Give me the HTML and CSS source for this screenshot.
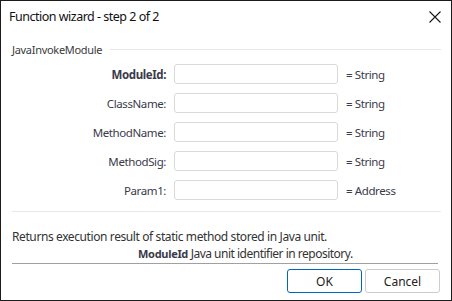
FILE: index.html
```html
<!DOCTYPE html>
<html lang="en">
<head>
    <meta charset="UTF-8">
    <title>Function wizard - step 2 of 2</title>
    <link rel="stylesheet" href="styles.css">
</head>
<body>

<div class="window">
    <div class="titlebar">
        <span class="title">Function wizard - step 2 of 2</span>
        <svg class="close" width="12" height="12" viewBox="0 0 12 12">
            <path d="M0.5 0.5 L11.5 11.5 M11.5 0.5 L0.5 11.5" stroke="#1a1a1a" stroke-width="1.1" fill="none"/>
        </svg>
    </div>

    <div class="group-head">
        <span>JavaInvokeModule</span>
        <div class="group-line"></div>
    </div>

    <div class="params">
        <label class="param-label bold">ModuleId:</label>
        <input type="text" class="param-input">
        <span class="param-type">= String</span>

        <label class="param-label">ClassName:</label>
        <input type="text" class="param-input">
        <span class="param-type">= String</span>

        <label class="param-label">MethodName:</label>
        <input type="text" class="param-input">
        <span class="param-type">= String</span>

        <label class="param-label">MethodSig:</label>
        <input type="text" class="param-input">
        <span class="param-type">= String</span>

        <label class="param-label">Param1:</label>
        <input type="text" class="param-input">
        <span class="param-type">= Address</span>
    </div>

    <div class="separator"></div>

    <div class="description">
        <p class="desc-main">Returns execution result of static method stored in Java unit.</p>
        <p class="desc-param"><b>ModuleId</b> Java unit identifier in repository.</p>
    </div>

    <div class="footer">
        <button class="btn btn-default">OK</button>
        <button class="btn">Cancel</button>
    </div>
</div>

</body>
</html>
```

FILE: styles.css
```css
* { box-sizing: border-box; }
body { margin: 0; font-family: "Segoe UI", "Noto Sans", "Open Sans", sans-serif; font-size: 12px; letter-spacing: -0.4px; color: #333; background: #fff; }
.window { width: 452px; height: 301px; border: 1px solid #1c1c1c; background: #fff; display: flex; flex-direction: column; }
.titlebar { height: 31px; display: flex; align-items: center; justify-content: space-between; padding: 0 10px 0 8px; }
.title { font-size: 12.5px; letter-spacing: -0.5px; color: #111; }
.close { display: block; margin-top: 1px; }
.group-head { display: flex; align-items: center; gap: 8px; padding: 0 10px 0 11px; margin-top: 9px; height: 16px; font-size: 11px; letter-spacing: -0.3px; color: #3b3b3b; }
.group-line { flex: 1; height: 1px; background: #e6e6e6; }
.params { display: grid; grid-template-columns: 161px 164px auto; column-gap: 8px; row-gap: 9px; align-items: center; margin-top: 7px; padding-left: 4px; font-size: 11.5px; letter-spacing: -0.4px; }
.param-label { text-align: right; color: #3a3a4a; }
.param-label.bold { font-weight: bold; }
.param-input { height: 20px; width: 164px; border: 1px solid #d9d9d9; border-radius: 3px; padding: 0 4px; font: inherit; }
.param-type { color: #3a3a4a; }
.separator { height: 1px; background: #e8e8e8; margin: 11px 10px 0 11px; }
.description { padding: 0 11px; margin-top: 16px; }
.description p { margin: 0; line-height: 17px; }
.desc-param { padding-left: 126px; letter-spacing: -0.5px; }
.desc-param b { font-size: 11px; letter-spacing: -0.3px; color: #3a3a4a; }
.footer { border-top: 1px solid #a0a0a0; margin: 1px 13px 0 11px; padding-top: 5px; display: flex; justify-content: flex-end; gap: 3px; }
.btn { width: 75px; height: 24px; border: 1px solid #cccccc; border-radius: 3px; background: #fff; font: inherit; color: #222; margin-right: -2px; }
.btn-default { border-color: #0067c0; margin-right: 0; }
```
